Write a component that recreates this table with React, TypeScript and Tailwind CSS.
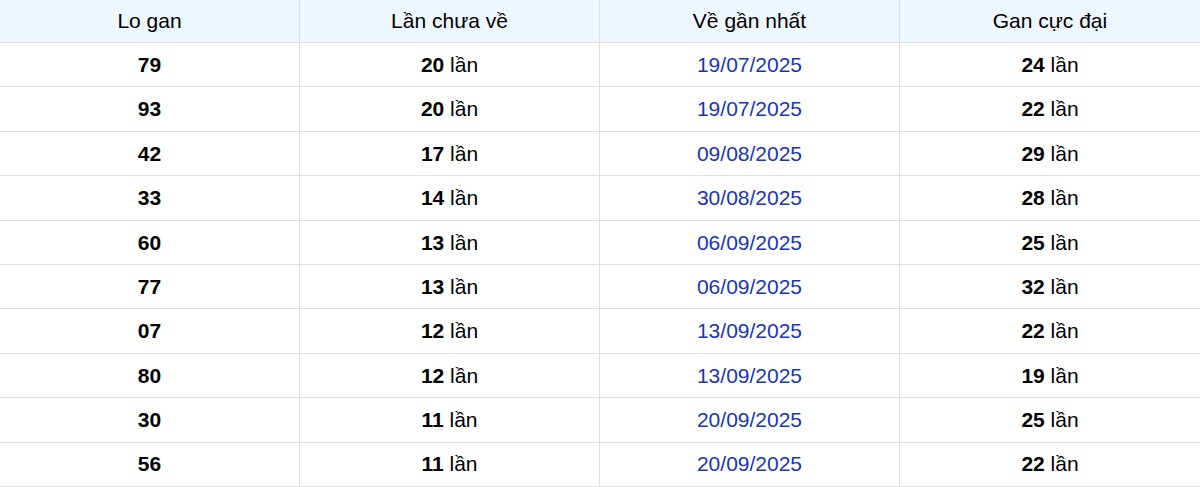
const rows = [
  { lo: "79", chua: 20, date: "19/07/2025", max: 24 },
  { lo: "93", chua: 20, date: "19/07/2025", max: 22 },
  { lo: "42", chua: 17, date: "09/08/2025", max: 29 },
  { lo: "33", chua: 14, date: "30/08/2025", max: 28 },
  { lo: "60", chua: 13, date: "06/09/2025", max: 25 },
  { lo: "77", chua: 13, date: "06/09/2025", max: 32 },
  { lo: "07", chua: 12, date: "13/09/2025", max: 22 },
  { lo: "80", chua: 12, date: "13/09/2025", max: 19 },
  { lo: "30", chua: 11, date: "20/09/2025", max: 25 },
  { lo: "56", chua: 11, date: "20/09/2025", max: 22 },
];

const headers = ["Lo gan", "Lần chưa về", "Về gần nhất", "Gan cực đại"];

const cell = "flex items-center justify-center border-r border-[#e0e0e0] last:border-r-0";

export default function App() {
  return (
    <div className="w-[1200px] bg-white font-['Liberation_Sans',Arial,sans-serif] text-[21px] text-black">
      <div className="grid h-[43px] grid-cols-4 border-b border-[#e0e0e0] bg-[#eef6ff]">
        {headers.map((h) => (
          <div key={h} className={cell}>
            {h}
          </div>
        ))}
      </div>
      {rows.map((r) => (
        <div key={r.lo} className="grid h-[44.4px] grid-cols-4 border-b border-[#e0e0e0]">
          <div className={cell}>
            <span className="font-bold">{r.lo}</span>
          </div>
          <div className={cell}>
            <span>
              <b>{r.chua}</b> lần
            </span>
          </div>
          <div className={cell}>
            <span className="text-[#1a35b8]">{r.date}</span>
          </div>
          <div className={cell}>
            <span>
              <b>{r.max}</b> lần
            </span>
          </div>
        </div>
      ))}
    </div>
  );
}
